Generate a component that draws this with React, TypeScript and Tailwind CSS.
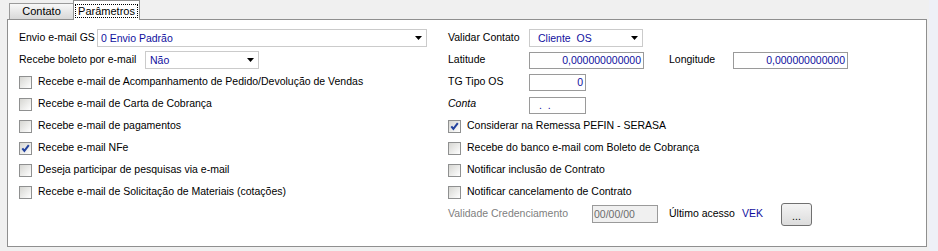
import React from "react";

const BLUE = "text-[#10109e]";

function Arrow() {
  return (
    <svg width="7" height="4" viewBox="0 0 7 4" className="shrink-0">
      <polygon points="0,0 7,0 3.5,4" fill="#000" />
    </svg>
  );
}

function Select({ value, className = "" }: { value: string; className?: string }) {
  return (
    <div className={`h-[18px] border border-[#cbcbcb] bg-white flex items-center justify-between pr-[4px] shrink-0 ${className}`}>
      <span className={`${BLUE} whitespace-pre leading-none`}>{value}</span>
      <Arrow />
    </div>
  );
}

function Input({ value, className = "" }: { value: string; className?: string }) {
  return (
    <div className={`h-[17px] border border-[#9a9a9a] bg-white flex items-center shrink-0 ${BLUE} leading-none whitespace-pre ${className}`}>
      {value}
    </div>
  );
}

function Check({ checked = false }: { checked?: boolean }) {
  return (
    <span className="w-[13px] h-[13px] border border-[#8f9090] bg-linear-to-br from-[#d6d6d2] to-white flex items-center justify-center shrink-0">
      {checked && (
        <svg width="9" height="9" viewBox="0 0 9 9">
          <path d="M1.3 4.3 L3.4 6.9 L7.8 1.2" fill="none" stroke="#23429e" strokeWidth="2" />
        </svg>
      )}
    </span>
  );
}

function CheckRow({ label, checked }: { label: string; checked?: boolean }) {
  return (
    <div className="h-[22px] flex items-center gap-[6px]">
      <Check checked={checked} />
      <span className="whitespace-nowrap">{label}</span>
    </div>
  );
}

const leftChecks = [
  { label: "Recebe e-mail de Acompanhamento de Pedido/Devolução de Vendas" },
  { label: "Recebe e-mail de Carta de Cobrança" },
  { label: "Recebe e-mail de pagamentos" },
  { label: "Recebe e-mail NFe", checked: true },
  { label: "Deseja participar de pesquisas via e-mail" },
  { label: "Recebe e-mail de Solicitação de Materiais (cotações)" },
];

const rightChecks = [
  { label: "Considerar na Remessa PEFIN - SERASA", checked: true },
  { label: "Recebe do banco e-mail com Boleto de Cobrança" },
  { label: "Notificar inclusão de Contrato" },
  { label: "Notificar cancelamento de Contrato" },
];

export default function App() {
  return (
    <div className="w-[938px] h-[251px] flex bg-[#eef0f7] text-[10.5px] text-black overflow-hidden font-['Liberation_Sans',Arial,sans-serif]">
      <div className="w-[929px] h-full bg-[#f0f0f0] flex flex-col">
        {/* Tabs */}
        <div className="flex items-end h-[19px] pl-[9px] shrink-0 text-[11px]">
          <div className="w-[64px] h-[16px] border border-r-0 border-b-0 border-[#9a9a9a] bg-linear-to-b from-[#f8f8f8] to-[#d8d8d8] flex items-center justify-center">
            Contato
          </div>
          <div className="w-[67px] h-[20px] -mb-px relative z-10 border border-b-0 border-[#8f8f8f] bg-white flex justify-center pt-[3px]">
            <span className="h-[14px] border border-dotted border-black px-[2px] flex items-center leading-none">Parâmetros</span>
          </div>
        </div>

        {/* Panel */}
        <div className="ml-[7px] w-[920px] h-[228px] border border-[#8f8f8f] bg-white pt-[7px] pl-[11px] grid grid-cols-[429px_1fr]">
          {/* Left column */}
          <div className="flex flex-col">
            <div className="h-[22px] flex items-center">
              <span className="w-[78px] whitespace-nowrap">Envio e-mail GS</span>
              <Select value="0 Envio Padrão" className="w-[330px] pl-[3px]" />
            </div>
            <div className="h-[22px] flex items-center">
              <span className="w-[126px] whitespace-nowrap">Recebe boleto por e-mail</span>
              <Select value="Não" className="w-[114px] pl-[4px]" />
            </div>
            {leftChecks.map((c) => (
              <CheckRow key={c.label} label={c.label} checked={c.checked} />
            ))}
          </div>

          {/* Right column */}
          <div className="flex flex-col">
            <div className="h-[22px] flex items-center">
              <span className="w-[81px] whitespace-nowrap">Validar Contato</span>
              <Select value="Cliente  OS" className="w-[114px] pl-[8px]" />
            </div>
            <div className="h-[22px] flex items-center">
              <span className="w-[81px]">Latitude</span>
              <Input value="0,000000000000" className="w-[115px] justify-end pr-[2px]" />
              <span className="w-[64px] ml-[25px]">Longitude</span>
              <Input value="0,000000000000" className="w-[115px] justify-end pr-[2px]" />
            </div>
            <div className="h-[22px] flex items-center">
              <span className="w-[81px] whitespace-nowrap">TG Tipo OS</span>
              <Input value="0" className="w-[57px] justify-end pr-[2px]" />
            </div>
            <div className="h-[22px] flex items-center">
              <span className="w-[81px] italic">Conta</span>
              <Input value=" .  ." className="w-[57px] pl-[6px] mt-[2px]" />
            </div>
            {rightChecks.map((c) => (
              <CheckRow key={c.label} label={c.label} checked={c.checked} />
            ))}
            <div className="h-[22px] flex items-center">
              <span className="w-[144px] text-[#808080] whitespace-nowrap">Validade Credenciamento</span>
              <div className="w-[66px] h-[18px] border border-[#9a9a9a] bg-[#f0f0f0] text-[#6d6d6d] flex items-center pl-[1px] leading-none">
                00/00/00
              </div>
              <span className="ml-[11px] w-[73px] whitespace-nowrap">Último acesso</span>
              <span className={`${BLUE} w-[39px]`}>VEK</span>
              <button className="w-[31px] h-[23px] mt-[1px] rounded-[3px] border border-[#707070] bg-linear-to-b from-[#f4f4f4] to-[#dcdcdc] flex items-end justify-center pb-[4px] leading-none">
                ...
              </button>
            </div>
          </div>
        </div>
      </div>
    </div>
  );
}
